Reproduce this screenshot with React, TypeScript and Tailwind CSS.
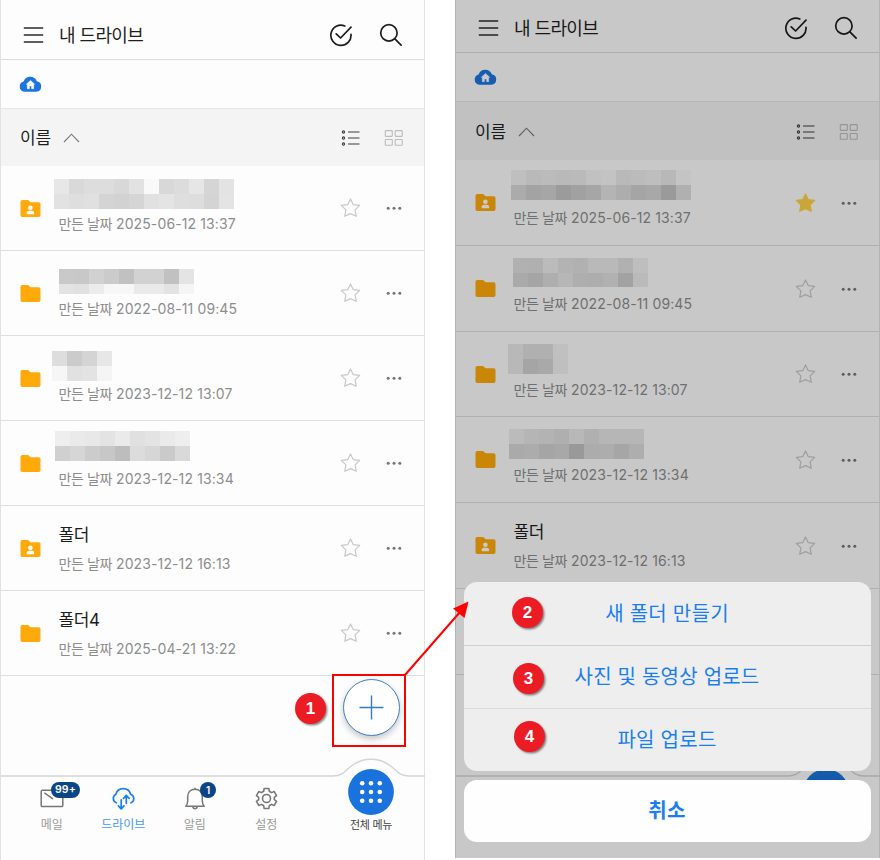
import React from "react";

type MosaicData = { x: number; y: number; rows: string[]; lastHeight?: number };
type FileRow = {
  name?: string;
  date?: string;
  shared?: boolean;
  starred?: boolean;
  height: number;
  mosaic?: MosaicData;
};

const leftRows: FileRow[] = [
  { date: "2025-06-12 13:37", shared: true, height: 85, mosaic: { x: 53, y: 13, rows: ["e7d9ddddd8e2f9d8dce6d5e3", "e2dee0d4d2d5e1e4deddd4e4"] } },
  { date: "2022-08-11 09:45", height: 85, mosaic: { x: 58, y: 18, rows: ["c9c8d1cbc1d2d2c1e4", "e3e1ecf7f7eaeae3f5"], lastHeight: 10 } },
  { date: "2023-12-12 13:07", height: 85, mosaic: { x: 51, y: 15, rows: ["ddcbd4e7", "f6e1e3f5"] } },
  { date: "2023-12-12 13:34", height: 85, mosaic: { x: 54, y: 10, rows: ["eeeae8e3eae0e3eaee", "d0d6ccc7bddcd6cad9"] } },
  { name: "폴더", date: "2023-12-12 16:13", shared: true, height: 85 },
  { name: "폴더4", date: "2025-04-21 13:22", height: 85 },
];

const rightRows: FileRow[] = [
  { date: "2025-06-12 13:37", shared: true, starred: true, height: 86, mosaic: { x: 55, y: 10, rows: ["bfb9bbb9bac1c3b9bbbeb8c4", "aba3a69ba1a6b4ada5a89ab0"] } },
  { date: "2022-08-11 09:45", height: 86, mosaic: { x: 57, y: 12, rows: ["b1b0bbb3b1b9b9b1be", "aaa5aeb6aeadb1a2ba"], lastHeight: 14 } },
  { date: "2023-12-12 13:07", height: 85, mosaic: { x: 52, y: 12, rows: ["b8b0b0c0", "b8a5a9bf"] } },
  { date: "2023-12-12 13:34", height: 86, mosaic: { x: 53, y: 12, rows: ["bbb5b3afb8b0b6b6b6", "aaaca5a899acada6ae"] } },
  { name: "폴더", date: "2023-12-12 16:13", shared: true, height: 86 },
  { height: 86 },
];

function Mosaic({ data }: { data: MosaicData }) {
  return (
    <div className="absolute z-10" style={{ left: data.x, top: data.y }}>
      {data.rows.map((row, r) => (
        <div key={r} className="flex">
          {(row.match(/../g) ?? []).map((level, c) => (
            <span
              key={c}
              className="block w-[15px]"
              style={{
                height: r === 1 && data.lastHeight ? data.lastHeight : 15,
                backgroundColor: `#${level}${level}${level}`,
              }}
            />
          ))}
        </div>
      ))}
    </div>
  );
}

function FolderIcon({ shared }: { shared?: boolean }) {
  return (
    <svg width="21" height="17" viewBox="0 0 21 17" className="shrink-0">
      <path transform="translate(.5 0)" d="M1.8 0H7.6L10 2.2H18.2A1.8 1.8 0 0 1 20 4V15.2A1.8 1.8 0 0 1 18.2 17H1.8A1.8 1.8 0 0 1 0 15.2V1.8A1.8 1.8 0 0 1 1.8 0Z" fill="#ffa90a" />
      {shared && (
        <g fill="#fff" transform="translate(.5 0)">
          <circle cx="9.9" cy="7.8" r="2.3" />
          <path d="M6.2 14.2V12.6C6.2 11.3 7.4 10.7 9.9 10.7S13.6 11.3 13.6 12.6V14.2Z" />
        </g>
      )}
    </svg>
  );
}

function StarIcon({ filled }: { filled?: boolean }) {
  return (
    <svg width="21" height="20" viewBox="-.5 0 21 20" className="shrink-0">
      <path
        d="M10 1L12.8 6.7L19.2 7.4L14.6 11.9L15.8 18.3L10 15.6L4.2 18.3L5.4 11.9L.8 7.4L7.2 6.7Z"
        fill={filled ? "#ffd24a" : "none"}
        stroke={filled ? "#ffd24a" : "#c8c8c8"}
        strokeWidth="1.2"
        strokeLinejoin="round"
      />
    </svg>
  );
}

function Row({ row }: { row: FileRow }) {
  return (
    <div className="relative flex items-center border-b border-[#dedede] pl-[19px] pr-[22px]" style={{ height: row.height }}>
      <FolderIcon shared={row.shared} />
      <div className="flex flex-1 flex-col pl-[17.5px]">
        <div className="flex h-[30px] items-center whitespace-nowrap pt-[3px] text-[17px] tracking-[-0.4px] text-[#1c1c1c]">{row.name}</div>
        {row.date && (
          <div className="flex h-[28px] items-center whitespace-nowrap text-[14px] text-[#8d8d8d]">
            <span className="tracking-[-0.4px]">만든 날짜</span>
            <span className="pl-[4px] tracking-[0.12px]">{row.date}</span>
          </div>
        )}
      </div>
      <StarIcon filled={row.starred} />
      <svg width="16" height="4" viewBox="0 0 16 4" className="ml-[25px] shrink-0" fill="#777">
        <circle cx="2.2" cy="2.2" r="1.5" />
        <circle cx="8" cy="2.2" r="1.5" />
        <circle cx="13.8" cy="2.2" r="1.5" />
      </svg>
      {row.mosaic && <Mosaic data={row.mosaic} />}
    </div>
  );
}

function Header({ lower }: { lower: boolean }) {
  return (
    <header className={`flex shrink-0 items-center border-b border-[#dcdcdc] pl-[22px] pr-[22px] ${lower ? "h-[60px] pt-[11px]" : "h-[53px] pt-[4px]"}`}>
      <svg width="21" height="18" viewBox="0 0 21 18" stroke="#2b2b2b" strokeWidth="1.6">
        <path d="M0.8 2H20.2M0.8 9H20.2M0.8 16H20.2" />
      </svg>
      <h1 className="flex-1 whitespace-nowrap pl-[15px] text-[18px] tracking-[-0.6px] text-[#1f1f1f]">내 드라이브</h1>
      <svg width="24" height="24" viewBox="0 0 24 24" fill="none" stroke="#1c1c1c" strokeWidth="1.7" strokeLinecap="round" strokeLinejoin="round">
        <path d="M16.8 3A10.1 10.1 0 1 0 23 11.400" />
        <path d="M8.2 10.800L12.6 15L23 4.2" />
      </svg>
      <svg width="24" height="24" viewBox="0 0 24 24" fill="none" stroke="#1c1c1c" strokeWidth="1.7" strokeLinecap="round" className="ml-[26px]">
        <circle cx="10.9" cy="9.900" r="8.2" />
        <path d="M16.900 15.900L23.100 22.200" />
      </svg>
    </header>
  );
}

function PathBar() {
  return (
    <div className="flex h-[49px] shrink-0 items-center border-b border-[#e6e6e6] pb-[1px] pl-[18px]">
      <svg width="23" height="17" viewBox="0 0 23 17">
        <path d="M5.4 16.8A5.2 5.2 0 0 1 4.6 6.6A7 7 0 0 1 17.8 6.3A5.3 5.3 0 0 1 17.4 16.8Z" fill="#1c76e0" />
        <path d="M11.500 5.4L15.700 9.3H14.700V13.700H12.600V11H10.400V13.700H8.300V9.3H7.300Z" fill="#fff" stroke="#fff" strokeWidth=".5" strokeLinejoin="round" />
      </svg>
    </div>
  );
}

function SortBar({ tall }: { tall: boolean }) {
  return (
    <div className={`flex shrink-0 items-center bg-[#f4f4f4] pl-[19px] pr-[20px] ${tall ? "h-[58px] pt-[1px]" : "h-[57px]"}`}>
      <span className="whitespace-nowrap pt-[3px] text-[17px] tracking-[-0.1px] text-[#1f1f1f]">이름</span>
      <svg width="17" height="10" viewBox="0 0 17 10" fill="none" stroke="#777" strokeWidth="1.1" className="ml-[12px]">
        <path d="M1 9L8.5 1.2L16 9" />
      </svg>
      <svg width="19" height="16" viewBox="-.5 0 19 16" fill="none" stroke="#3d3d3d" className="ml-auto">
        <path d="M6.500 2H18M6.500 8H18M6.500 14H18" strokeWidth="1.2" />
        <circle cx="2" cy="2" r="1.1" strokeWidth="1.1" />
        <circle cx="2" cy="8" r="1.1" strokeWidth="1.1" />
        <circle cx="2" cy="14" r="1.1" strokeWidth="1.1" />
      </svg>
      <svg width="20" height="16" viewBox="0 0 20 16" fill="none" stroke="#bcbcbc" strokeWidth="1.1" className="ml-[24px]">
        <rect x="1.3" y=".6" width="7" height="5.8" rx=".6" />
        <rect x="11.2" y=".6" width="7" height="5.8" rx=".6" />
        <rect x="1.3" y="9.500" width="7" height="5.8" rx=".6" />
        <rect x="11.2" y="9.500" width="7" height="5.8" rx=".6" />
      </svg>
    </div>
  );
}

function MailIcon() {
  return (
    <svg width="24" height="24" viewBox="0 0 24 24" fill="none" stroke="#777" strokeWidth="1.5" strokeLinecap="round" strokeLinejoin="round">
      <rect x="1.2" y="4.2" width="21.6" height="16.4" rx="1.2" />
      <path d="M4.8 7.2L12.500 12.600" />
    </svg>
  );
}

function DriveIcon() {
  return (
    <svg width="24" height="24" viewBox="0 0 24 24" fill="none" stroke="#1a7fe8" strokeWidth="1.7" strokeLinecap="round" strokeLinejoin="round">
      <path d="M5.400 16.800A4.7 4.7 0 0 1 4.900 8.200A7.6 7.600 0 0 1 19.600 8.200A4.600 4.600 0 0 1 20 16.800" />
      <path d="M15.300 17.300V9.500M12.500 12.300L15.300 9.400L18.100 12.300" />
      <path d="M10.200 13.800V22.400M7.400 19.800L10.200 22.800L13 19.800" />
    </svg>
  );
}

function BellIcon() {
  return (
    <svg width="24" height="24" viewBox="0 0 24 24" fill="none" stroke="#777" strokeWidth="1.5" strokeLinecap="round" strokeLinejoin="round">
      <path d="M2.8 20.200H21.2C20 18.8 19.3 17.6 19.3 15V10.8C19.3 6.200 16.4 3.3 12 3.3S4.7 6.2 4.7 10.8V15C4.7 17.6 4 18.8 2.8 20.2Z" />
      <path d="M12 3V2.300M9.8 20.700C10 22 10.8 22.800 12 22.800S14 22 14.200 20.700" />
    </svg>
  );
}

function GearIcon() {
  return (
    <svg width="24" height="24" viewBox="0 0 24 24" fill="none" stroke="#777" strokeWidth="1.6" strokeLinejoin="round">
      <circle cx="12.500" cy="12.500" r="4" />
      <path transform="translate(.9 .9) scale(.966)" d="M9.6 1.6H14.4L14.9 4.5L17.2 5.9L20 4.8L22.4 9L20.1 10.8V13.2L22.4 15L20 19.2L17.2 18.1L14.9 19.5L14.4 22.4H9.6L9.1 19.5L6.8 18.1L4 19.2L1.6 15L3.9 13.2V10.8L1.6 9L4 4.8L6.8 5.9L9.1 4.5Z" />
    </svg>
  );
}

function NavItem({ icon, label, badge, active }: { icon: React.ReactNode; label: string; badge?: string; active?: boolean }) {
  return (
    <div className="relative flex w-[71.5px] flex-col items-center">
      {icon}
      <span className={`mt-[5px] whitespace-nowrap text-[12px] leading-[20px] tracking-[-0.1px] ${active ? "text-[#4a98e8]" : "text-[#9a9a9a]"}`}>{label}</span>
      {badge && (
        <span className={`absolute top-[-4px] flex h-[16px] items-center justify-center rounded-full bg-[#0b4586] font-semibold text-white ${badge.length > 1 ? "left-[35px] w-[29px] text-[10.500px] tracking-[0.2px]" : "left-[41px] w-[16px] text-[10px]"}`}>
          {badge}
        </span>
      )}
    </div>
  );
}

function BottomNav({ labels }: { labels: boolean }) {
  return (
    <nav className="relative flex h-[85px] shrink-0 items-start justify-end pr-[4px] pt-[11px]">
      <svg width="424" height="20" viewBox="0 0 424 20" className="absolute left-0 top-[-17px]" fill="none">
        <path d="M0 18H332C342 18 344 12.500 350 8.200C362 -1 378 -1 390 8.200C396 12.500 398 18 408 18H424" stroke="#d4d4d4" strokeWidth="1.4" />
      </svg>
      {labels && (
        <div className="flex flex-1 pl-[15px]">
          <NavItem icon={<MailIcon />} label="메일" badge="99+" />
          <NavItem icon={<DriveIcon />} label="드라이브" active />
          <NavItem icon={<BellIcon />} label="알림" badge="1" />
          <NavItem icon={<GearIcon />} label="설정" />
        </div>
      )}
      <div className="relative mt-[-17px] flex w-[98px] flex-col items-center">
        <svg width="46" height="46" viewBox="0 0 46 46">
          <circle cx="23" cy="23" r="22.9" fill="#1a73dc" />
          <g fill="#fff">
            {[14.2, 23, 31.8].map((y) => [14.2, 23, 31.8].map((x) => <circle key={`${x}-${y}`} cx={x} cy={y} r="2.300" />))}
          </g>
        </svg>
        {labels && <span className="whitespace-nowrap text-[11px] leading-[20px] tracking-[-0.3px] text-[#444]">전체 메뉴</span>}
      </div>
    </nav>
  );
}

function Phone({ rows, left }: { rows: FileRow[]; left: boolean }) {
  return (
    <div className="flex h-full flex-col border-x border-[#e2e2e2] bg-[#fdfdfd]">
      <Header lower={left} />
      <PathBar />
      <SortBar tall={!left} />
      {rows.map((row, i) => (
        <Row key={i} row={row} />
      ))}
      <div className="flex-1" />
      <BottomNav labels={left} />
    </div>
  );
}

function StepBadge({ n, className }: { n: number; className: string }) {
  return (
    <span className={`absolute z-30 flex h-[31px] w-[31px] items-center justify-center rounded-full bg-[#ec1c24] font-['Liberation_Sans',sans-serif] text-[17px] font-bold text-white shadow-[1.5px_1.5px_2px_rgba(0,0,0,0.45)] ${className}`}>
      {n}
    </span>
  );
}

export default function App() {
  return (
    <div className="relative flex h-[860px] w-[880px] justify-between overflow-hidden bg-white font-['Inter','Noto_Sans_CJK_KR',sans-serif]">
      <section className="relative h-[860px] w-[425px]">
        <Phone rows={leftRows} left />
        <button className="absolute left-[343px] top-[679px] flex h-[57px] w-[57px] items-center justify-center rounded-full border border-[#3a80cc] bg-white shadow-[0_3px_6px_rgba(0,0,0,0.22)]">
          <svg width="25" height="25" viewBox="0 0 25 25" stroke="#2f7ccb" strokeWidth="1.4">
            <path d="M12.500 .5V24.500M.5 12.500H24.500" />
          </svg>
        </button>
      </section>

      <section className="relative isolate h-[858px] w-[425px] overflow-hidden">
        <div className="h-[860px]">
          <Phone rows={rightRows} left={false} />
        </div>
        <div className="absolute inset-0 bg-black/[0.207]" />
        <div className="absolute left-[9px] top-[582px] z-20 flex w-[407px] flex-col gap-[9px] text-center text-[20px] text-[#1a7ef0]">
          <div className="flex h-[189px] flex-col overflow-hidden rounded-[13px] bg-[#eeeeee]">
            <button className="h-[64px] border-b border-[#cfcfcf] pr-[1px] tracking-[0.25px]">새 폴더 만들기</button>
            <button className="h-[63px] border-b border-[#dadada] pr-[1px] tracking-[0.2px]">사진 및 동영상 업로드</button>
            <button className="h-[62px] pr-[1px] tracking-[0.25px]">파일 업로드</button>
          </div>
          <button className="h-[62px] rounded-[13px] bg-[#fefefe] pr-[1px] font-bold tracking-[0.25px]">취소</button>
        </div>
      </section>

      <div className="absolute left-[332px] top-[674px] z-30 h-[73px] w-[74px] border-2 border-[#f00]" />
      <svg width="70" height="80" viewBox="0 0 70 80" className="absolute left-[402px] top-[600px] z-30">
        <path d="M3 75L58 12" stroke="#f00" strokeWidth="2" />
        <path d="M66.500 1.500L51 8.500L62.500 18Z" fill="#f00" />
      </svg>
      <StepBadge n={1} className="left-[295px] top-[693px]" />
      <StepBadge n={2} className="left-[512px] top-[597px]" />
      <StepBadge n={3} className="left-[513px] top-[663px]" />
      <StepBadge n={4} className="left-[514px] top-[721px]" />
    </div>
  );
}
